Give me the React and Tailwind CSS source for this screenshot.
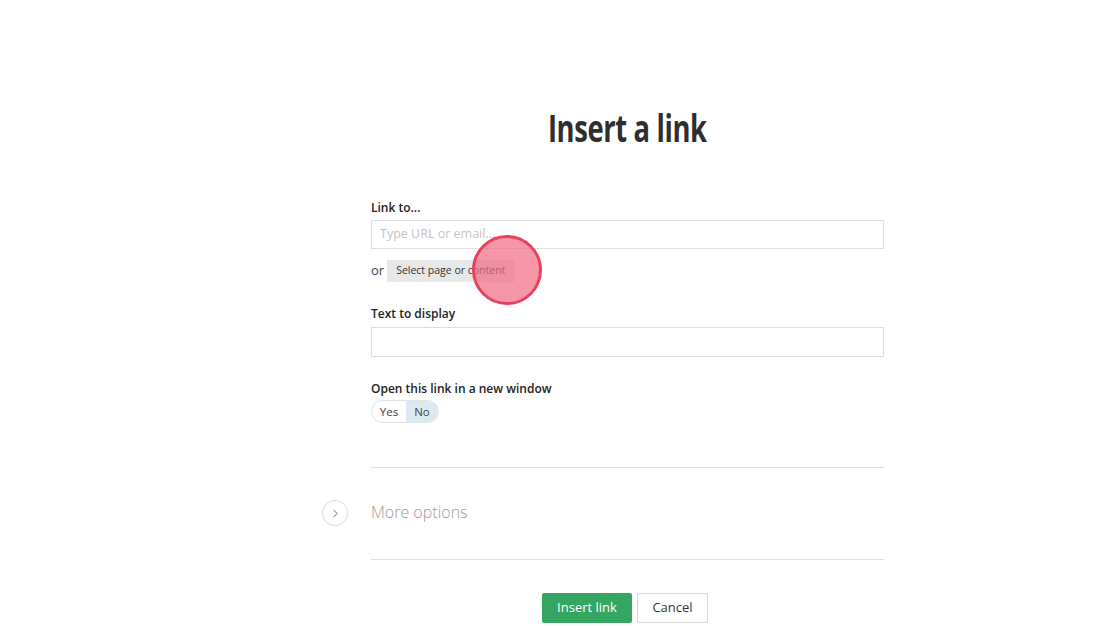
import { ChevronRight } from "lucide-react";

export default function App() {
  return (
    <main
      className="relative w-[1120px] h-[626px] bg-white text-[#333] overflow-hidden"
      style={{ fontFamily: '"Open Sans", sans-serif' }}
    >
      <div className="w-[513px] ml-[371px] pt-[104px]">
        <div className="flex justify-center">
          <h1 className="inline-block text-[37px] leading-[48px] font-bold text-[#2f2f2f] tracking-[-0.5px] scale-x-[0.74]">
            Insert a link
          </h1>
        </div>

        {/* LINK TO */}
        <div className="mt-[47px]">
          <label className="block text-[12px] font-semibold leading-[18px] text-[#222]">Link to...</label>
          <div className="mt-[3px] h-[29px] border border-[#dedede] flex items-center px-[8px] text-[12.5px] text-[#c4c4c4]">
            Type URL or email...
          </div>
          <div className="mt-[11px] flex items-center gap-[3px]">
            <span className="text-[13px] text-[#444]">or</span>
            <span className="h-[22px] px-[9px] bg-[#e8e8e8] text-[10.5px] text-[#333] flex items-center">
              Select page or content
            </span>
          </div>
        </div>

        {/* TEXT TO DISPLAY */}
        <div className="mt-[23px]">
          <label className="block text-[12px] font-semibold leading-[18px] text-[#222]">Text to display</label>
          <div className="mt-[4px] h-[30px] border border-[#dedede]" />
        </div>

        {/* NEW WINDOW */}
        <div className="mt-[23px]">
          <label className="block text-[12px] font-semibold leading-[18px] text-[#222]">
            Open this link in a new window
          </label>
          <div className="mt-[2px] inline-flex h-[23px] rounded-full border border-[#e2e2e2] overflow-hidden text-[11.5px]">
            <span className="w-[34px] flex items-center justify-center text-[#444]">Yes</span>
            <span className="w-[32px] flex items-center justify-center bg-[#dbe9f2] text-[#444]">No</span>
          </div>
        </div>

        {/* MORE OPTIONS */}
        <div className="mt-[44px] border-t border-[#e0e0e0]" />
        <div className="relative h-[91px] flex items-center">
          <span className="absolute left-[-49px] top-[32px] w-[26px] h-[26px] rounded-full border border-[#dcdcdc] flex items-center justify-center text-[#555]">
            <ChevronRight size={13} strokeWidth={1.6} />
          </span>
          <span className="text-[16px] font-light text-[#999] mb-[4px]">More options</span>
        </div>
        <div className="border-t border-[#e0e0e0]" />

        <div className="mt-[33px] flex justify-center gap-[5px] pr-[5px]">
          <button className="h-[30px] w-[90px] rounded-[2px] bg-[#35a562] text-white text-[13px]">
            Insert link
          </button>
          <button className="h-[30px] w-[71px] rounded-[2px] border border-[#d8d8d8] bg-white text-[#333] text-[13px]">
            Cancel
          </button>
        </div>
      </div>

      {/* click marker */}
      <div className="absolute left-[472px] top-[235px] w-[70px] h-[70px] rounded-full border-[3px] border-[#e8405f] bg-[#f26b83]/70" />
    </main>
  );
}
